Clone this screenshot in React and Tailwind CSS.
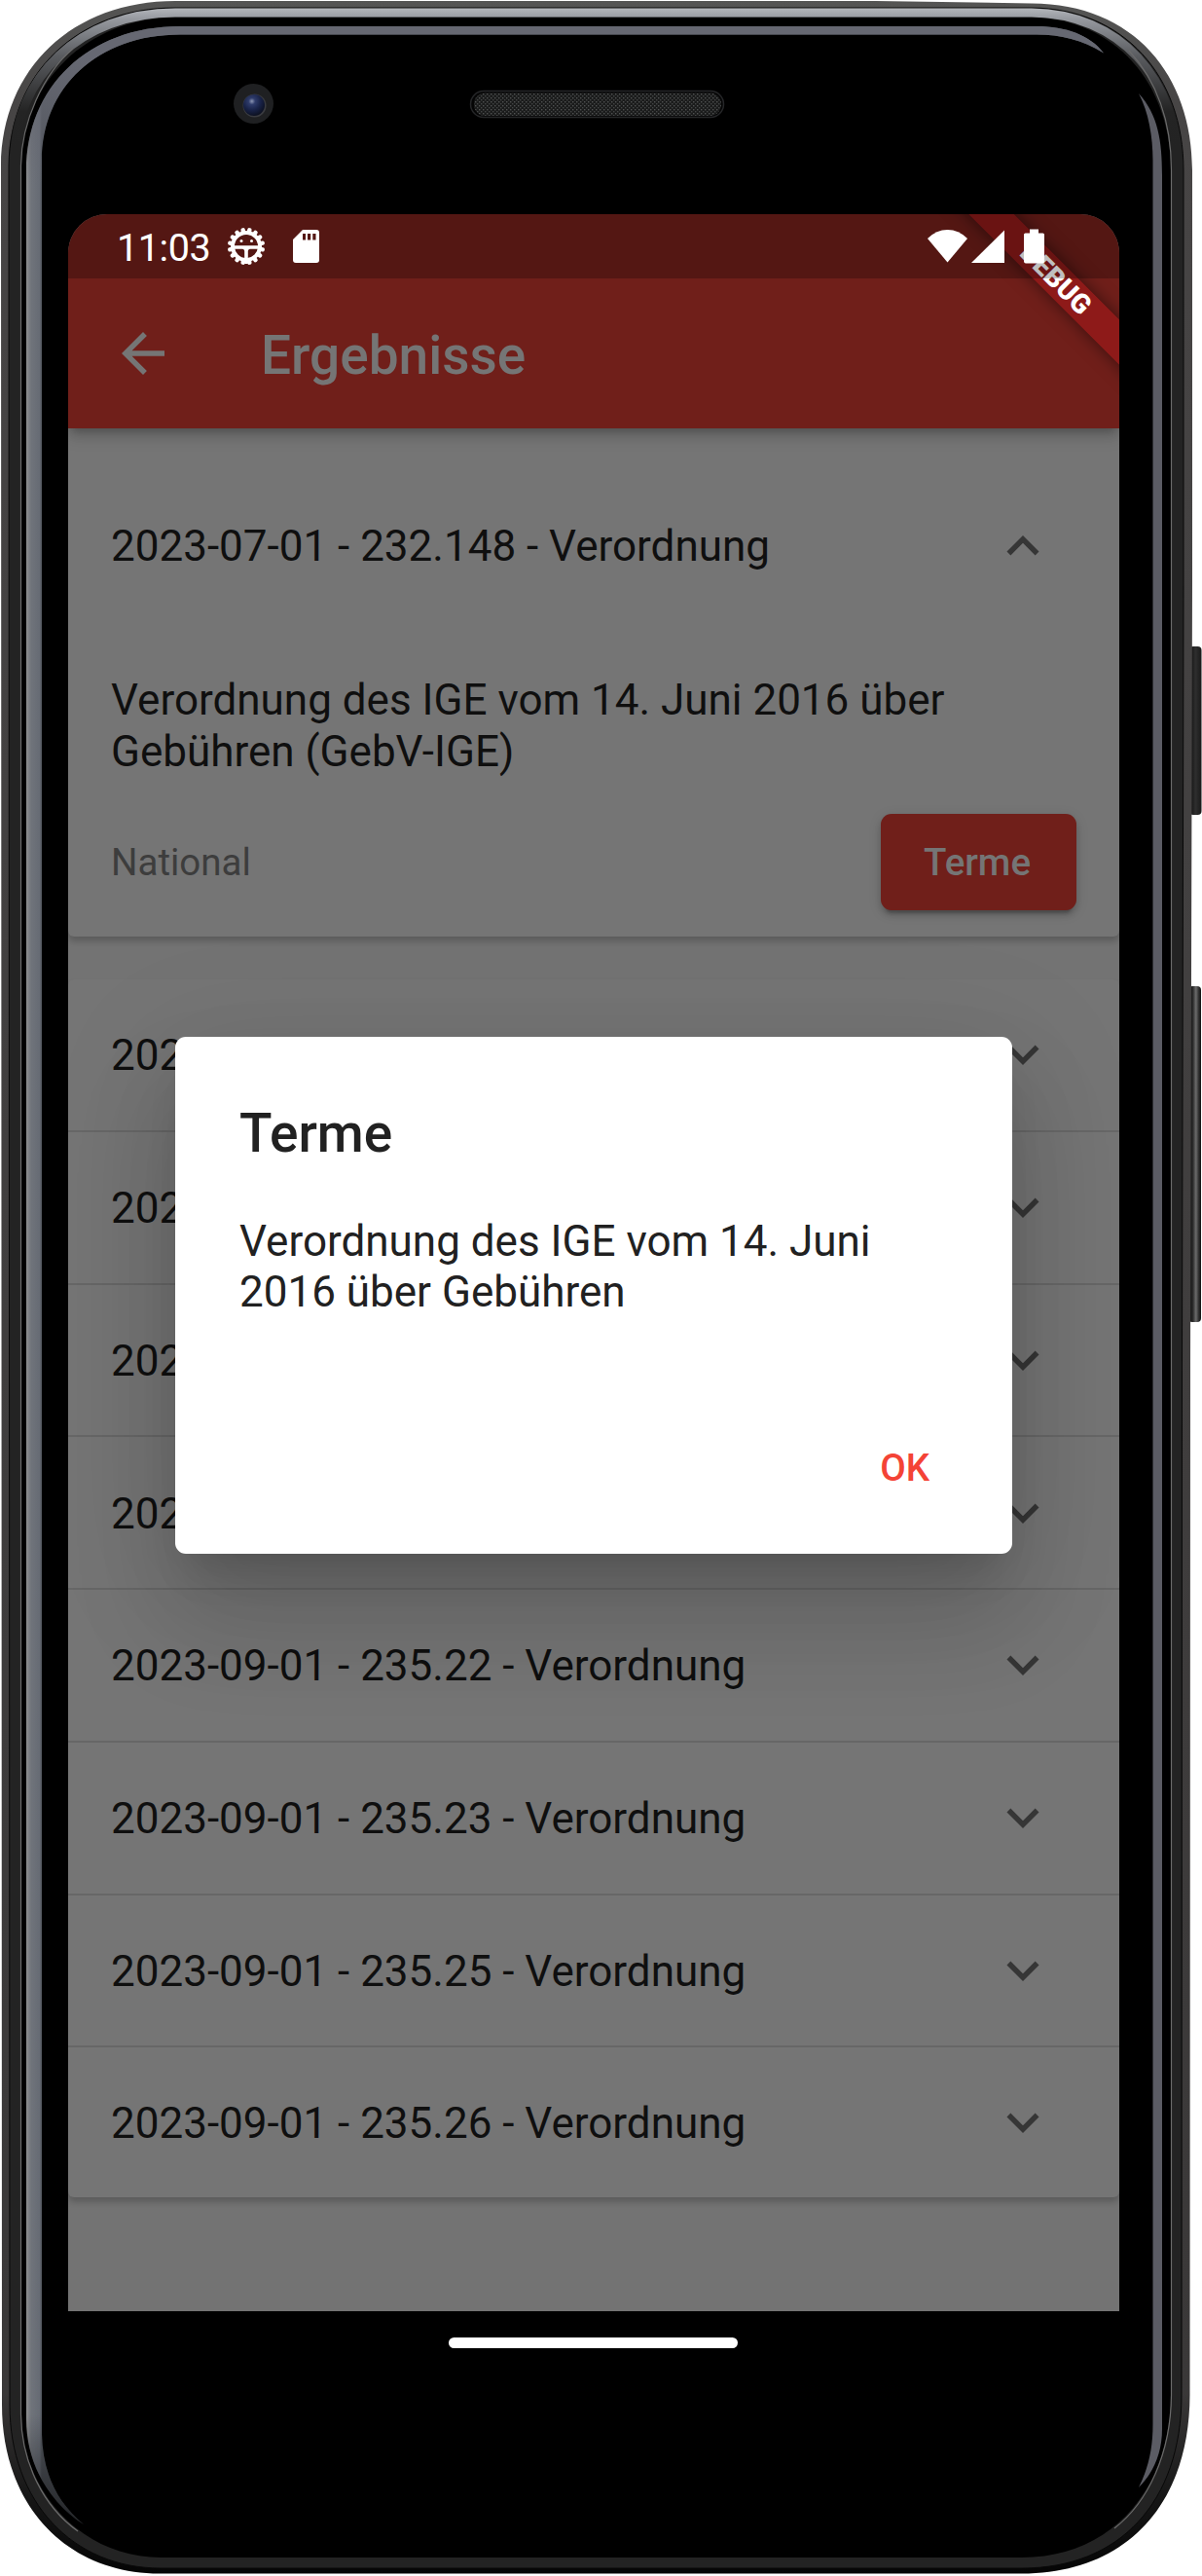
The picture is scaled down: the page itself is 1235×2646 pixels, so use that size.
import React from "react";

const ROWS = [
  "2023",
  "2023",
  "2023",
  "2023",
  "2023-09-01 - 235.22 - Verordnung",
  "2023-09-01 - 235.23 - Verordnung",
  "2023-09-01 - 235.25 - Verordnung",
  "2023-09-01 - 235.26 - Verordnung",
];

const TEETH = Array.from({ length: 16 }, (_, i) => 11.25 + i * 22.5);

function Chevron({ up }) {
  return (
    <svg viewBox="0 0 24 24" className="size-[66px] shrink-0 fill-[#363636]">
      <path
        d={
          up
            ? "M12 8l-6 6 1.41 1.41L12 10.83l4.59 4.58L18 14z"
            : "M16.59 8.59L12 13.17 7.41 8.59 6 10l6 6 6-6z"
        }
      />
    </svg>
  );
}

function PhoneBody() {
  return (
    <svg
      viewBox="0 0 1235 2646"
      className="pointer-events-none absolute inset-0 h-[2646px] w-[1235px]"
    >
      <defs>
        <linearGradient id="rim" x1="0" y1="0" x2="0" y2="1">
          <stop offset="0" stopColor="#555554" />
          <stop offset="0.04" stopColor="#474545" />
          <stop offset="0.93" stopColor="#3a3838" />
          <stop offset="0.97" stopColor="#161616" />
          <stop offset="1" stopColor="#050505" />
        </linearGradient>
        <linearGradient id="silver" gradientUnits="userSpaceOnUse" x1="0" y1="8" x2="0" y2="150">
          <stop offset="0" stopColor="#b4b7bc" />
          <stop offset="0.08" stopColor="#96999f" />
          <stop offset="0.35" stopColor="#5a5c60" />
          <stop offset="0.75" stopColor="#242424" />
          <stop offset="1" stopColor="#242424" stopOpacity="0" />
        </linearGradient>
        <linearGradient id="slate" gradientUnits="userSpaceOnUse" x1="27" y1="0" x2="43" y2="0">
          <stop offset="0" stopColor="#8e8f90" />
          <stop offset="0.3" stopColor="#70747b" />
          <stop offset="0.85" stopColor="#666b74" />
          <stop offset="1" stopColor="#50545b" />
        </linearGradient>
        <linearGradient id="arc" gradientUnits="userSpaceOnUse" x1="0" y1="60" x2="0" y2="190">
          <stop offset="0" stopColor="#666872" />
          <stop offset="1" stopColor="#666872" stopOpacity="0" />
        </linearGradient>
        <linearGradient id="tail" gradientUnits="userSpaceOnUse" x1="0" y1="2480" x2="0" y2="2600">
          <stop offset="0" stopColor="#000" stopOpacity="0" />
          <stop offset="1" stopColor="#000" stopOpacity="0.6" />
        </linearGradient>
        <linearGradient id="power" x1="0" y1="0" x2="1" y2="0">
          <stop offset="0" stopColor="#0c0c0c" />
          <stop offset="0.5" stopColor="#2e2e2e" />
          <stop offset="1" stopColor="#1a1a1a" />
        </linearGradient>
        <linearGradient id="volume" x1="0" y1="0" x2="1" y2="0">
          <stop offset="0" stopColor="#080808" />
          <stop offset="0.35" stopColor="#2a2a2a" />
          <stop offset="0.6" stopColor="#6c6c6c" />
          <stop offset="0.8" stopColor="#333" />
          <stop offset="1" stopColor="#111" />
        </linearGradient>
        <radialGradient id="lens" cx="0.4" cy="0.32" r="0.7">
          <stop offset="0" stopColor="#8d97b4" />
          <stop offset="0.22" stopColor="#2f3c6b" />
          <stop offset="0.6" stopColor="#182247" />
          <stop offset="1" stopColor="#0c1020" />
        </radialGradient>
        <pattern id="mesh" width="4" height="4" patternUnits="userSpaceOnUse">
          <rect width="4" height="4" fill="#1a1b1b" />
          <rect width="1.4" height="1.4" fill="#505252" />
          <rect x="2" y="2" width="1.4" height="1.4" fill="#434545" />
        </pattern>
      </defs>

      <rect x="1222" y="664" width="12.5" height="173" rx="4" fill="url(#power)" />
      <rect x="1221" y="1013" width="13" height="345" rx="4" fill="url(#volume)" />

      <path
        d="M180 1 H900 L1060 3.500 C1165 4 1225 77 1225 175 V600 L1223 1400 L1222.500 2460 C1222 2575 1155 2643.500 1050 2643.500 H165 C70 2644 2 2575 2 2470 L1 170 C2 70 75 1 180 1 Z"
        fill="url(#rim)"
      />
      <path
        d="M180 8 H1060 C1155 9 1216 78 1216 175 V600 L1214.500 1400 L1214 2460 C1214 2570 1150 2638 1050 2638 H165 C75 2638 10 2570 10 2470 L9 170 C10 75 80 8 180 8 Z"
        fill="#232323"
        stroke="#080808"
        strokeWidth="1"
      />
      <path
        d="M14 165 C15 80 82 13 180 13 H1060 C1150 14 1210 80 1211 175"
        fill="none"
        stroke="url(#silver)"
        strokeWidth="9"
      />
      <path
        d="M180 18 H1060 C1145 19 1203 85 1203 175 V2460 C1202 2560 1140 2627 1050 2627 H165 C85 2627 22 2560 22 2480 V170 C22 85 90 18 180 18 Z"
        fill="#000"
      />
      <path
        d="M21.5 2480 V170 C22 125 45 75 75 50 M1160 52 C1190 85 1203.5 125 1203.5 175 V2460 C1203 2520 1180 2570 1145 2597 M21.5 2480 C22 2530 45 2575 80 2600"
        fill="none"
        stroke="#6b6b6b"
        strokeWidth="1.2"
      />

      <path
        d="M86 2593 C50 2570 27 2530 27 2485 V175 C27 90 90 27 185 27 H1065 C1095 27 1120 36 1134 54.500 C1112 41 1090 35.500 1065 35.500 H185 C100 35.500 43 90 43 165 V2500 C44 2540 58 2570 86 2593 Z"
        fill="url(#slate)"
      />
      <path
        d="M27 190 V175 C27 90 90 27 185 27 H1065 C1095 27 1120 36 1134 54.500 C1112 41 1090 35.500 1065 35.500 H185 C100 35.500 43 90 43 165 V190 Z"
        fill="url(#arc)"
      />
      <path
        d="M86 2593 C50 2570 27 2530 27 2485 V2480 H43 V2500 C44 2540 58 2570 86 2593 Z"
        fill="url(#tail)"
      />
      <path
        d="M1170 96 C1190 118 1194 145 1194 180 V2495 C1194 2520 1185 2540 1170 2555 C1180 2535 1184.500 2515 1184.500 2490 V165 C1184.500 140 1180 115 1170 96 Z"
        fill="#5b5c64"
      />

      <circle cx="260.500" cy="106.500" r="20.500" fill="#1f2022" />
      <circle cx="261.500" cy="108.500" r="12" fill="#3a3b40" />
      <circle cx="261" cy="108" r="11" fill="url(#lens)" />

      <rect x="483.500" y="93.500" width="260" height="27" rx="13.500" fill="#050505" stroke="#252628" strokeWidth="1.500" />
      <rect x="487" y="95.500" width="254" height="23.500" rx="11.500" fill="url(#mesh)" />
    </svg>
  );
}

function StatusBar() {
  return (
    <div className="relative z-10 flex h-[66px] items-center bg-black/25 pl-[50px] text-white">
      <span className="mt-[3px] w-[113px] text-[39.500px] leading-[47px] tracking-[-0.4px]">11:03</span>
      <svg viewBox="0 0 40 40" className="size-10">
        {TEETH.map((a) => (
          <rect key={a} x="17.800" y="0.800" width="4.400" height="6" rx="2" fill="#fff" transform={`rotate(${a} 20 20)`} />
        ))}
        <circle cx="20" cy="20" r="14" fill="none" stroke="#fff" strokeWidth="4" />
        <path d="M6 21H34M20 21V38" stroke="#fff" strokeWidth="3.600" />
        <path d="M16 22L20 26L24 22Z" fill="#fff" />
        <circle cx="15" cy="14.500" r="1.500" fill="#fff" />
        <circle cx="25.500" cy="14.500" r="1.500" fill="#fff" />
      </svg>
      <svg viewBox="0 0 27 34" className="ml-[28px] h-[34px] w-[27px]">
        <path
          fillRule="evenodd"
          fill="#fff"
          d="M10 0H24Q27 0 27 3V31Q27 34 24 34H3Q0 34 0 31V10ZM10 4V10.500H13V4ZM15 4V10.500H18.200V4ZM20.300 4V10.500H23.500V4Z"
        />
      </svg>
      <svg viewBox="0 0 121 36" className="ml-[625px] h-9 w-[121px]" fill="#fff">
        <path d="M20.500 34.500L0 10Q9 1 20.500 1T41 10Z" />
        <path d="M79 1.500V35H45Z" />
        <path d="M105 0.500H114V4.500H118.500Q120 4.500 120 6V33.500Q120 35.500 118 35.500H101Q99 35.500 99 33.500V6Q99 4.500 100.500 4.500H105Z" />
      </svg>
    </div>
  );
}

function Dialog() {
  return (
    <div className="absolute top-[844.500px] left-[110px] flex h-[531px] w-[860px] flex-col rounded-[11px] bg-white px-[66px] pt-[67.500px] text-[#212121] shadow-[0_30px_42px_-18px_rgba(0,0,0,0.16),0_66px_105px_8px_rgba(0,0,0,0.12),0_25px_126px_22px_rgba(0,0,0,0.08)]">
      <h2 className="text-[55px] leading-[65px] font-medium">Terme</h2>
      <p className="mt-[52px] text-[44px] leading-[52px]">
        Verordnung des IGE vom 14. Juni
        <br />
        2016 über Gebühren
      </p>
      <button className="mt-[132px] mr-[19px] self-end text-[38.500px] leading-[45px] font-medium text-[#f44336]">
        OK
      </button>
    </div>
  );
}

export default function App() {
  return (
    <div className="relative flex h-[2646px] w-[1235px] flex-col bg-white pt-[220px] pl-[70px] font-['Roboto',sans-serif]">
      <PhoneBody />

      <div className="relative flex h-[2154px] w-[1080px] flex-col overflow-hidden rounded-t-[40px] bg-[#737373]">
        <div className="relative z-10 bg-[#701f1a] shadow-[0_5px_11px_-3px_rgba(0,0,0,0.3),0_11px_14px_rgba(0,0,0,0.1)]">
          <div className="absolute inset-0 overflow-hidden">
            <div className="absolute top-[50px] left-[864.500px] flex h-[33px] w-[300px] origin-center rotate-45 items-center justify-center bg-[#a01719]/63 text-[28px] leading-[33px] font-black text-white shadow-[0_0_17px_rgba(0,0,0,0.5)]">
              DEBUG
            </div>
          </div>
          <StatusBar />
          <div className="flex h-[154px] items-center pl-11 text-[#757575]">
            <svg viewBox="0 0 24 24" className="size-[66px] fill-[#757575]">
              <path d="M20 11H7.830l5.590-5.590L12 4l-8 8 8 8 1.410-1.410L7.830 13H20v-2z" />
            </svg>
            <h1 className="mt-1 ml-[88px] text-[55px] leading-[64px] font-medium">Ergebnisse</h1>
          </div>
        </div>

        <div className="flex flex-col gap-11">
          <section className="h-[522px] rounded-b-[6px] bg-[#757575] shadow-[0_5px_6px_rgba(0,0,0,0.2)]">
            <div className="flex h-[242px] items-center justify-between pr-[66px] pl-11 text-[44px] leading-[52px] text-[#0f0f0f]">
              <span>2023-07-01 - 232.148 - Verordnung</span>
              <Chevron up />
            </div>
            <p className="mt-[10.500px] pl-11 text-[44px] leading-[53px] text-[#0f0f0f]">
              Verordnung des IGE vom 14. Juni 2016 über
              <br />
              Gebühren (GebV-IGE)
            </p>
            <div className="mt-[37.500px] flex items-center justify-between pr-11 pl-11">
              <span className="text-[38.500px] leading-[45px] text-[#3d3d3d]">National</span>
              <button className="h-[99px] w-[201px] rounded-[11px] bg-[#701f1a] pr-[3px] text-[38.500px] leading-[45px] font-medium text-[#757575] shadow-[0_8px_3px_-5px_rgba(0,0,0,0.2),0_5px_6px_rgba(0,0,0,0.14),0_3px_14px_rgba(0,0,0,0.12)]">
                Terme
              </button>
            </div>
          </section>

          <section className="rounded-[6px] bg-[#757575] shadow-[0_5px_6px_rgba(0,0,0,0.2)]">
            {ROWS.map((label, i) => (
              <div
                key={i}
                className="flex h-[156.750px] items-center justify-between border-b-[2.750px] border-[#676767] pr-[66px] pl-11 text-[44px] leading-[52px] text-[#0f0f0f] last:h-[154px] last:border-b-0"
              >
                <span className="mt-[2px]">{label}</span>
                <Chevron />
              </div>
            ))}
          </section>
        </div>

        <Dialog />
      </div>

      <div className="relative mt-[27px] ml-[391px] h-[11px] w-[297px] rounded-full bg-white" />
    </div>
  );
}
